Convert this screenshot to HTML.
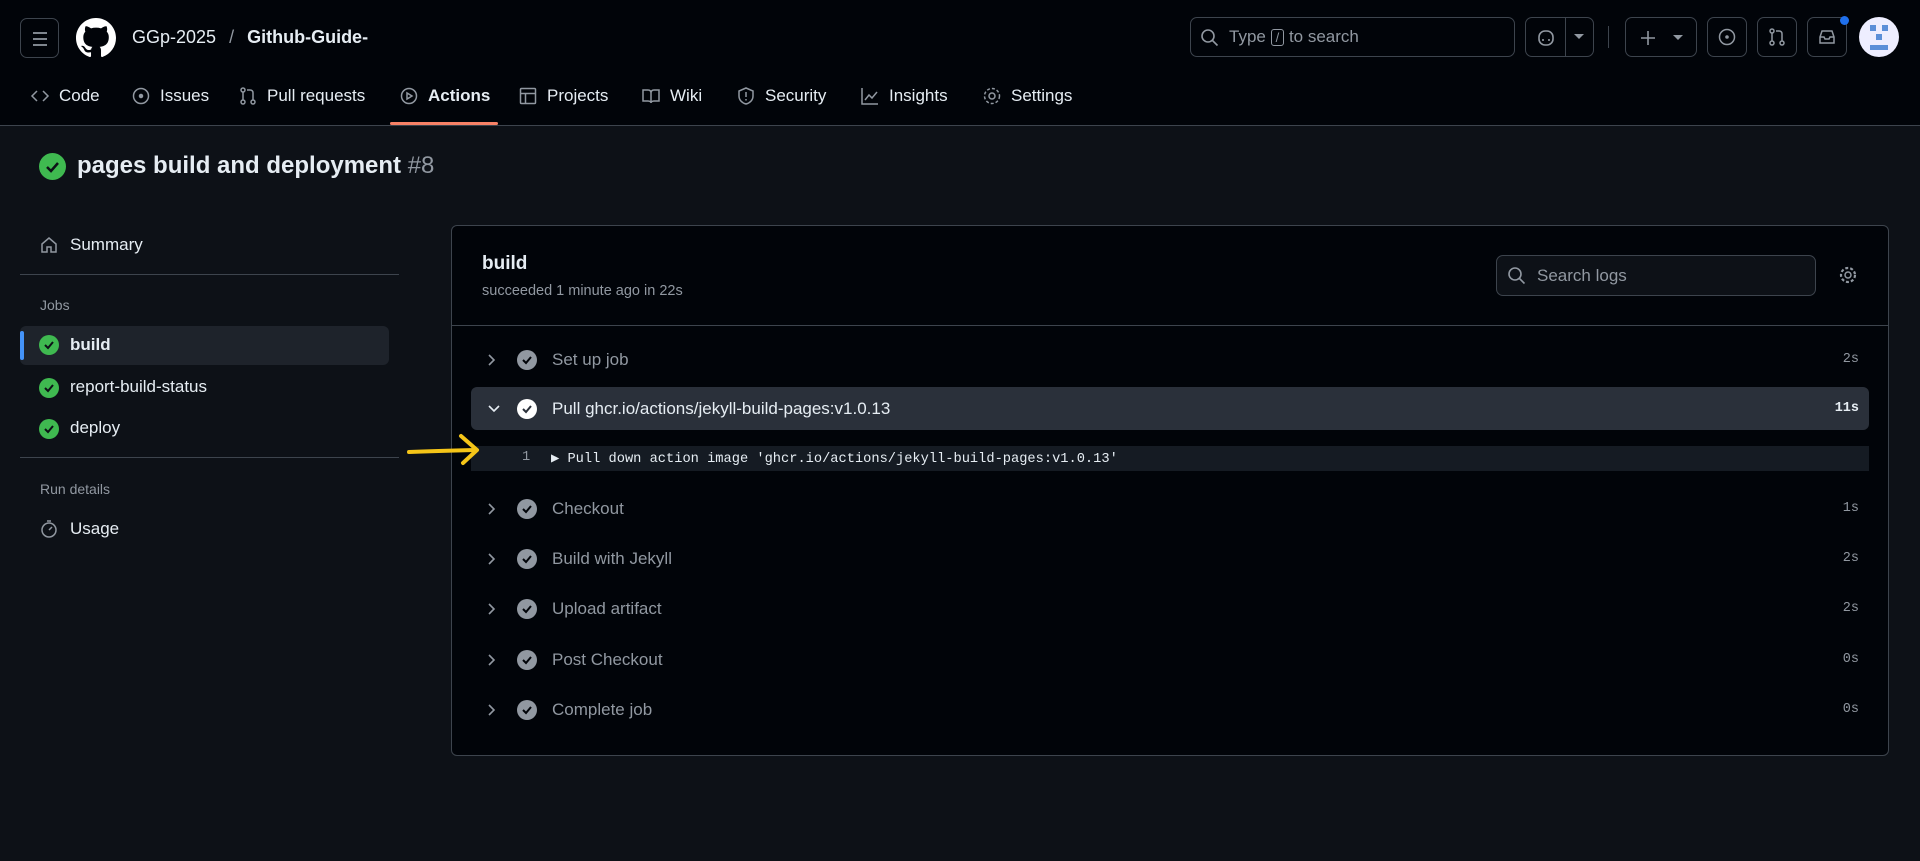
<!DOCTYPE html>
<html><head><meta charset="utf-8"><style>
*{box-sizing:border-box;margin:0;padding:0}
body{width:1920px;height:861px;background:#0d1117;color:#e6edf3;font-family:"Liberation Sans",sans-serif;position:relative;overflow:hidden}
.abs{position:absolute}
.hdr{left:0;top:0;width:1920px;height:126px;background:#010409;border-bottom:1px solid #3d444d}
.btn{border:1px solid #3d444d;border-radius:7px;position:absolute}
svg{display:block}
.nav{top:86px;font-size:17px;color:#e6edf3;display:flex;align-items:center;gap:9px}
.nav svg{stroke:#9198a1;fill:none;stroke-width:1.5}
.side{font-size:17px;color:#e6edf3}
.chk{border-radius:50%;background:#3fb950;width:20px;height:20px}
.step{left:471px;width:1398px;height:43px;display:flex;align-items:center;font-size:17px;color:#9198a1}
.step .chev{width:46px;padding-left:16px}
.step .ci{width:20px;height:20px;border-radius:50%;background:#9198a1;margin-right:15px;position:relative}
.step .t{font-family:"Liberation Mono",monospace;font-size:13.5px;margin-left:auto;padding-right:10px}
</style></head><body>
<div class="abs hdr"></div>
<div class="btn" style="left:20px;top:18px;width:39px;height:40px"><svg width="39" height="40"><path d="M12 14h14M12 20h14M12 26h14" stroke="#9198a1" stroke-width="1.8"/></svg></div>
<svg class="abs" style="left:76px;top:18px" width="40" height="40" viewBox="0 0 16 16"><path fill="#fff" d="M8 0C3.58 0 0 3.58 0 8c0 3.540 2.290 6.530 5.470 7.590.4.07.55-.17.55-.38 0-.19-.01-.82-.01-1.490-2.010.37-2.530-.49-2.690-.94-.09-.23-.48-.94-.82-1.130-.28-.15-.68-.52-.01-.53.63-.01 1.080.58 1.230.82.72 1.210 1.870.87 2.330.66.07-.52.28-.87.51-1.070-1.780-.2-3.640-.89-3.640-3.950 0-.87.31-1.590.82-2.150-.08-.2-.36-1.020.08-2.120 0 0 .67-.21 2.200.82.64-.18 1.320-.27 2-.27.68 0 1.360.09 2 .27 1.530-1.040 2.200-.82 2.200-.82.44 1.100.16 1.920.08 2.120.51.56.82 1.270.82 2.150 0 3.070-1.870 3.750-3.650 3.950.29.25.54.73.54 1.480 0 1.070-.01 1.930-.01 2.200 0 .21.15.46.55.38A8.013 8.013 0 0016 8c0-4.420-3.580-8-8-8z"/></svg>
<div class="abs" style="left:132px;top:27px;font-size:18px;color:#e6edf3">GGp-2025 <span style="color:#9198a1;margin:0 8px">/</span> <b>Github-Guide-</b></div>
<div class="btn" style="left:1190px;top:17px;width:325px;height:40px"><svg class="abs" style="left:9px;top:10px" width="20" height="20"><circle cx="8" cy="8" r="6" stroke="#9198a1" stroke-width="1.6" fill="none"/><path d="M12.5 12.5l5 5" stroke="#9198a1" stroke-width="1.6"/></svg><span class="abs" style="left:38px;top:9px;font-size:17px;color:#9198a1">Type <span style="border:1px solid #9198a1;border-radius:3px;padding:0 4px;font-size:13px">/</span> to search</span></div>
<div class="btn" style="left:1525px;top:17px;width:69px;height:40px"><div class="abs" style="left:39px;top:0;width:1px;height:38px;background:#3d444d"></div><svg class="abs" style="left:10px;top:10px" width="20" height="20"><rect x="3" y="3" width="14" height="14" rx="6" stroke="#9198a1" stroke-width="1.6" fill="none"/><path d="M7 11v2M13 11v2" stroke="#9198a1" stroke-width="1.6"/></svg><svg class="abs" style="left:48px;top:16px" width="10" height="6"><path d="M0 0h10L5 5z" fill="#9198a1"/></svg></div>
<div class="abs" style="left:1608px;top:26px;width:1px;height:22px;background:#3d444d"></div>
<div class="btn" style="left:1625px;top:17px;width:72px;height:40px"><svg class="abs" style="left:12px;top:10px" width="20" height="20"><path d="M10 3v14M3 10h14" stroke="#9198a1" stroke-width="1.6"/></svg><svg class="abs" style="left:47px;top:17px" width="10" height="6"><path d="M0 0h10L5 5z" fill="#9198a1"/></svg></div>
<div class="btn" style="left:1707px;top:17px;width:40px;height:40px"><svg class="abs" style="left:9px;top:9px" width="20" height="20"><circle cx="10" cy="10" r="7.5" stroke="#9198a1" stroke-width="1.5" fill="none"/><circle cx="10" cy="10" r="1.8" fill="#9198a1"/></svg></div>
<div class="btn" style="left:1757px;top:17px;width:40px;height:40px"><svg class="abs" style="left:9px;top:9px" width="20" height="20" fill="none" stroke="#9198a1" stroke-width="1.5"><circle cx="5" cy="4" r="2"/><circle cx="5" cy="16" r="2"/><circle cx="15" cy="16" r="2"/><path d="M5 6v8M15 14V7c0-2-1-3-3-3H9"/></svg></div>
<div class="btn" style="left:1807px;top:17px;width:40px;height:40px"><svg class="abs" style="left:9px;top:9px" width="20" height="20" fill="none" stroke="#9198a1" stroke-width="1.5"><path d="M3 10l2-6h10l2 6v6H3zM3 10h4l1 2h4l1-2h4"/></svg></div>
<div class="abs" style="left:1840px;top:16px;width:9px;height:9px;border-radius:50%;background:#1f6feb"></div>
<div class="abs" style="left:1859px;top:17px;width:40px;height:40px;border-radius:50%;background:#eef"><div class="abs" style="left:11px;top:8px;width:6px;height:6px;background:#5b8fd8"></div><div class="abs" style="left:23px;top:8px;width:6px;height:6px;background:#5b8fd8"></div><div class="abs" style="left:17px;top:17px;width:6px;height:6px;background:#5b8fd8"></div><div class="abs" style="left:11px;top:28px;width:18px;height:5px;background:#5b8fd8"></div></div>

<div class="abs nav" style="left:30px"><svg width="20" height="20"><path d="M7 5l-5 5 5 5M13 5l5 5-5 5"/></svg>Code</div>
<div class="abs nav" style="left:131px"><svg width="20" height="20"><circle cx="10" cy="10" r="7.5"/><circle cx="10" cy="10" r="1.5" fill="#9198a1"/></svg>Issues</div>
<div class="abs nav" style="left:238px"><svg width="20" height="20"><circle cx="5" cy="4" r="2"/><circle cx="5" cy="16" r="2"/><circle cx="15" cy="16" r="2"/><path d="M5 6v8M15 14V7c0-2-1-3-3-3H9"/></svg>Pull requests</div>
<div class="abs nav" style="left:399px;font-weight:bold"><svg width="20" height="20"><circle cx="10" cy="10" r="7.5"/><path d="M8 7v6l5-3z"/></svg>Actions</div>
<div class="abs" style="left:390px;top:122px;width:108px;height:3px;background:#f78166;border-radius:2px"></div>
<div class="abs nav" style="left:518px"><svg width="20" height="20"><rect x="2.5" y="2.5" width="15" height="15" rx="1"/><path d="M2.5 7.5h15M7.5 7.5v10"/></svg>Projects</div>
<div class="abs nav" style="left:641px"><svg width="20" height="20"><path d="M2 4h5c2 0 3 1 3 3v10c0-1-1-2-3-2H2zM18 4h-5c-2 0-3 1-3 3v10c0-1 1-2 3-2h5z"/></svg>Wiki</div>
<div class="abs nav" style="left:736px"><svg width="20" height="20"><path d="M10 2l7 3v5c0 4-3 7-7 8-4-1-7-4-7-8V5z"/><path d="M10 6v5M10 13v1.5"/></svg>Security</div>
<div class="abs nav" style="left:860px"><svg width="20" height="20"><path d="M2 2v16h16M5 14l4-5 3 3 5-6"/></svg>Insights</div>
<div class="abs nav" style="left:982px"><svg width="20" height="20"><circle cx="10" cy="10" r="3"/><circle cx="10" cy="10" r="7.5" stroke-dasharray="3 2"/></svg>Settings</div>

<div class="abs chk" style="left:39px;top:153px;width:27px;height:27px"><svg width="27" height="27"><path d="M8 14l4 4 7-8" stroke="#0d1117" stroke-width="2.5" fill="none"/></svg></div>
<div class="abs" style="left:77px;top:152px;font-size:24px;font-weight:bold">pages build and deployment <span style="color:#9198a1;font-weight:normal">#8</span></div>

<svg class="abs" style="left:39px;top:235px" width="20" height="20" fill="none" stroke="#9198a1" stroke-width="1.5"><path d="M3 9l7-6 7 6v8h-5v-5H8v5H3z"/></svg>
<div class="abs side" style="left:70px;top:235px">Summary</div>
<div class="abs" style="left:20px;top:274px;width:379px;height:1px;background:#3d444d"></div>
<div class="abs" style="left:40px;top:297px;font-size:14px;color:#9198a1">Jobs</div>
<div class="abs" style="left:20px;top:326px;width:369px;height:39px;background:#1e232b;border-radius:6px"></div>
<div class="abs" style="left:20px;top:331px;width:4px;height:29px;background:#4493f8;border-radius:2px"></div>
<div class="abs chk" style="left:39px;top:335px"><svg width="20" height="20"><path d="M6 10l3 3 5-6" stroke="#0d1117" stroke-width="2" fill="none"/></svg></div>
<div class="abs side" style="left:70px;top:335px;font-weight:bold">build</div>
<div class="abs chk" style="left:39px;top:378px"><svg width="20" height="20"><path d="M6 10l3 3 5-6" stroke="#0d1117" stroke-width="2" fill="none"/></svg></div>
<div class="abs side" style="left:70px;top:377px">report-build-status</div>
<div class="abs chk" style="left:39px;top:419px"><svg width="20" height="20"><path d="M6 10l3 3 5-6" stroke="#0d1117" stroke-width="2" fill="none"/></svg></div>
<div class="abs side" style="left:70px;top:418px">deploy</div>
<div class="abs" style="left:20px;top:457px;width:379px;height:1px;background:#3d444d"></div>
<div class="abs" style="left:40px;top:481px;font-size:14px;color:#9198a1">Run details</div>
<svg class="abs" style="left:39px;top:519px" width="20" height="20" fill="none" stroke="#9198a1" stroke-width="1.5"><circle cx="10" cy="11" r="7"/><path d="M8 2h4M10 11l3-3"/></svg>
<div class="abs side" style="left:70px;top:519px">Usage</div>

<div class="abs" style="left:451px;top:225px;width:1438px;height:531px;background:#010409;border:1px solid #3d444d;border-radius:6px"></div>
<div class="abs" style="left:482px;top:253px;font-size:19px;font-weight:bold">build</div>
<div class="abs" style="left:482px;top:283px;font-size:14.5px;color:#9198a1">succeeded 1 minute ago in 22s</div>
<div class="btn" style="left:1496px;top:255px;width:320px;height:41px;background:#0d1117"><svg class="abs" style="left:10px;top:10px" width="20" height="20"><circle cx="8" cy="8" r="6" stroke="#9198a1" stroke-width="1.6" fill="none"/><path d="M12.5 12.5l5 5" stroke="#9198a1" stroke-width="1.6"/></svg><span class="abs" style="left:40px;top:10px;font-size:17px;color:#9198a1">Search logs</span></div>
<svg class="abs" style="left:1838px;top:265px" width="20" height="20" fill="none" stroke="#9198a1" stroke-width="1.5"><circle cx="10" cy="10" r="3"/><circle cx="10" cy="10" r="7" stroke-dasharray="3 2" stroke-width="2.2"/></svg>
<div class="abs" style="left:452px;top:325px;width:1436px;height:1px;background:#3d444d"></div>

<div class="abs step" style="top:338px"><div class="chev"><svg width="10" height="14"><path d="M2 2l5 5-5 5" stroke="#9198a1" stroke-width="1.6" fill="none"/></svg></div><div class="ci"><svg width="20" height="20"><path d="M6 10l3 3 5-6" stroke="#010409" stroke-width="2" fill="none"/></svg></div>Set up job<span class="t">2s</span></div>
<div class="abs step" style="top:387px;background:#2a303a;border-radius:6px;color:#e6edf3"><div class="chev"><svg width="14" height="10"><path d="M2 2l5 5 5-5" stroke="#e6edf3" stroke-width="1.6" fill="none"/></svg></div><div class="ci" style="background:#fff"><svg width="20" height="20"><path d="M6 10l3 3 5-6" stroke="#2a303a" stroke-width="2" fill="none"/></svg></div>Pull ghcr.io/actions/jekyll-build-pages:v1.0.13<span class="t" style="font-weight:bold">11s</span></div>
<div class="abs" style="left:471px;top:446px;width:1398px;height:25px;background:#151b23"></div>
<div class="abs" style="left:522px;top:450px;font-family:'Liberation Mono',monospace;font-size:13.7px;color:#9198a1">1</div>
<div class="abs" style="left:551px;top:450px;font-family:'Liberation Mono',monospace;font-size:13.7px;color:#e6edf3">▶ Pull down action image 'ghcr.io/actions/jekyll-build-pages:v1.0.13'</div>
<svg class="abs" style="left:405px;top:432px" width="80" height="34"><path d="M4 20 Q30 19 70 18" stroke="#f5c518" stroke-width="4" fill="none" stroke-linecap="round"/><path d="M56 4 L72 18 L58 31" stroke="#f5c518" stroke-width="4" fill="none" stroke-linecap="round" stroke-linejoin="round"/></svg>

<div class="abs step" style="top:487px"><div class="chev"><svg width="10" height="14"><path d="M2 2l5 5-5 5" stroke="#9198a1" stroke-width="1.6" fill="none"/></svg></div><div class="ci"><svg width="20" height="20"><path d="M6 10l3 3 5-6" stroke="#010409" stroke-width="2" fill="none"/></svg></div>Checkout<span class="t">1s</span></div>
<div class="abs step" style="top:537px"><div class="chev"><svg width="10" height="14"><path d="M2 2l5 5-5 5" stroke="#9198a1" stroke-width="1.6" fill="none"/></svg></div><div class="ci"><svg width="20" height="20"><path d="M6 10l3 3 5-6" stroke="#010409" stroke-width="2" fill="none"/></svg></div>Build with Jekyll<span class="t">2s</span></div>
<div class="abs step" style="top:587px"><div class="chev"><svg width="10" height="14"><path d="M2 2l5 5-5 5" stroke="#9198a1" stroke-width="1.6" fill="none"/></svg></div><div class="ci"><svg width="20" height="20"><path d="M6 10l3 3 5-6" stroke="#010409" stroke-width="2" fill="none"/></svg></div>Upload artifact<span class="t">2s</span></div>
<div class="abs step" style="top:638px"><div class="chev"><svg width="10" height="14"><path d="M2 2l5 5-5 5" stroke="#9198a1" stroke-width="1.6" fill="none"/></svg></div><div class="ci"><svg width="20" height="20"><path d="M6 10l3 3 5-6" stroke="#010409" stroke-width="2" fill="none"/></svg></div>Post Checkout<span class="t">0s</span></div>
<div class="abs step" style="top:688px"><div class="chev"><svg width="10" height="14"><path d="M2 2l5 5-5 5" stroke="#9198a1" stroke-width="1.6" fill="none"/></svg></div><div class="ci"><svg width="20" height="20"><path d="M6 10l3 3 5-6" stroke="#010409" stroke-width="2" fill="none"/></svg></div>Complete job<span class="t">0s</span></div>
</body></html>
